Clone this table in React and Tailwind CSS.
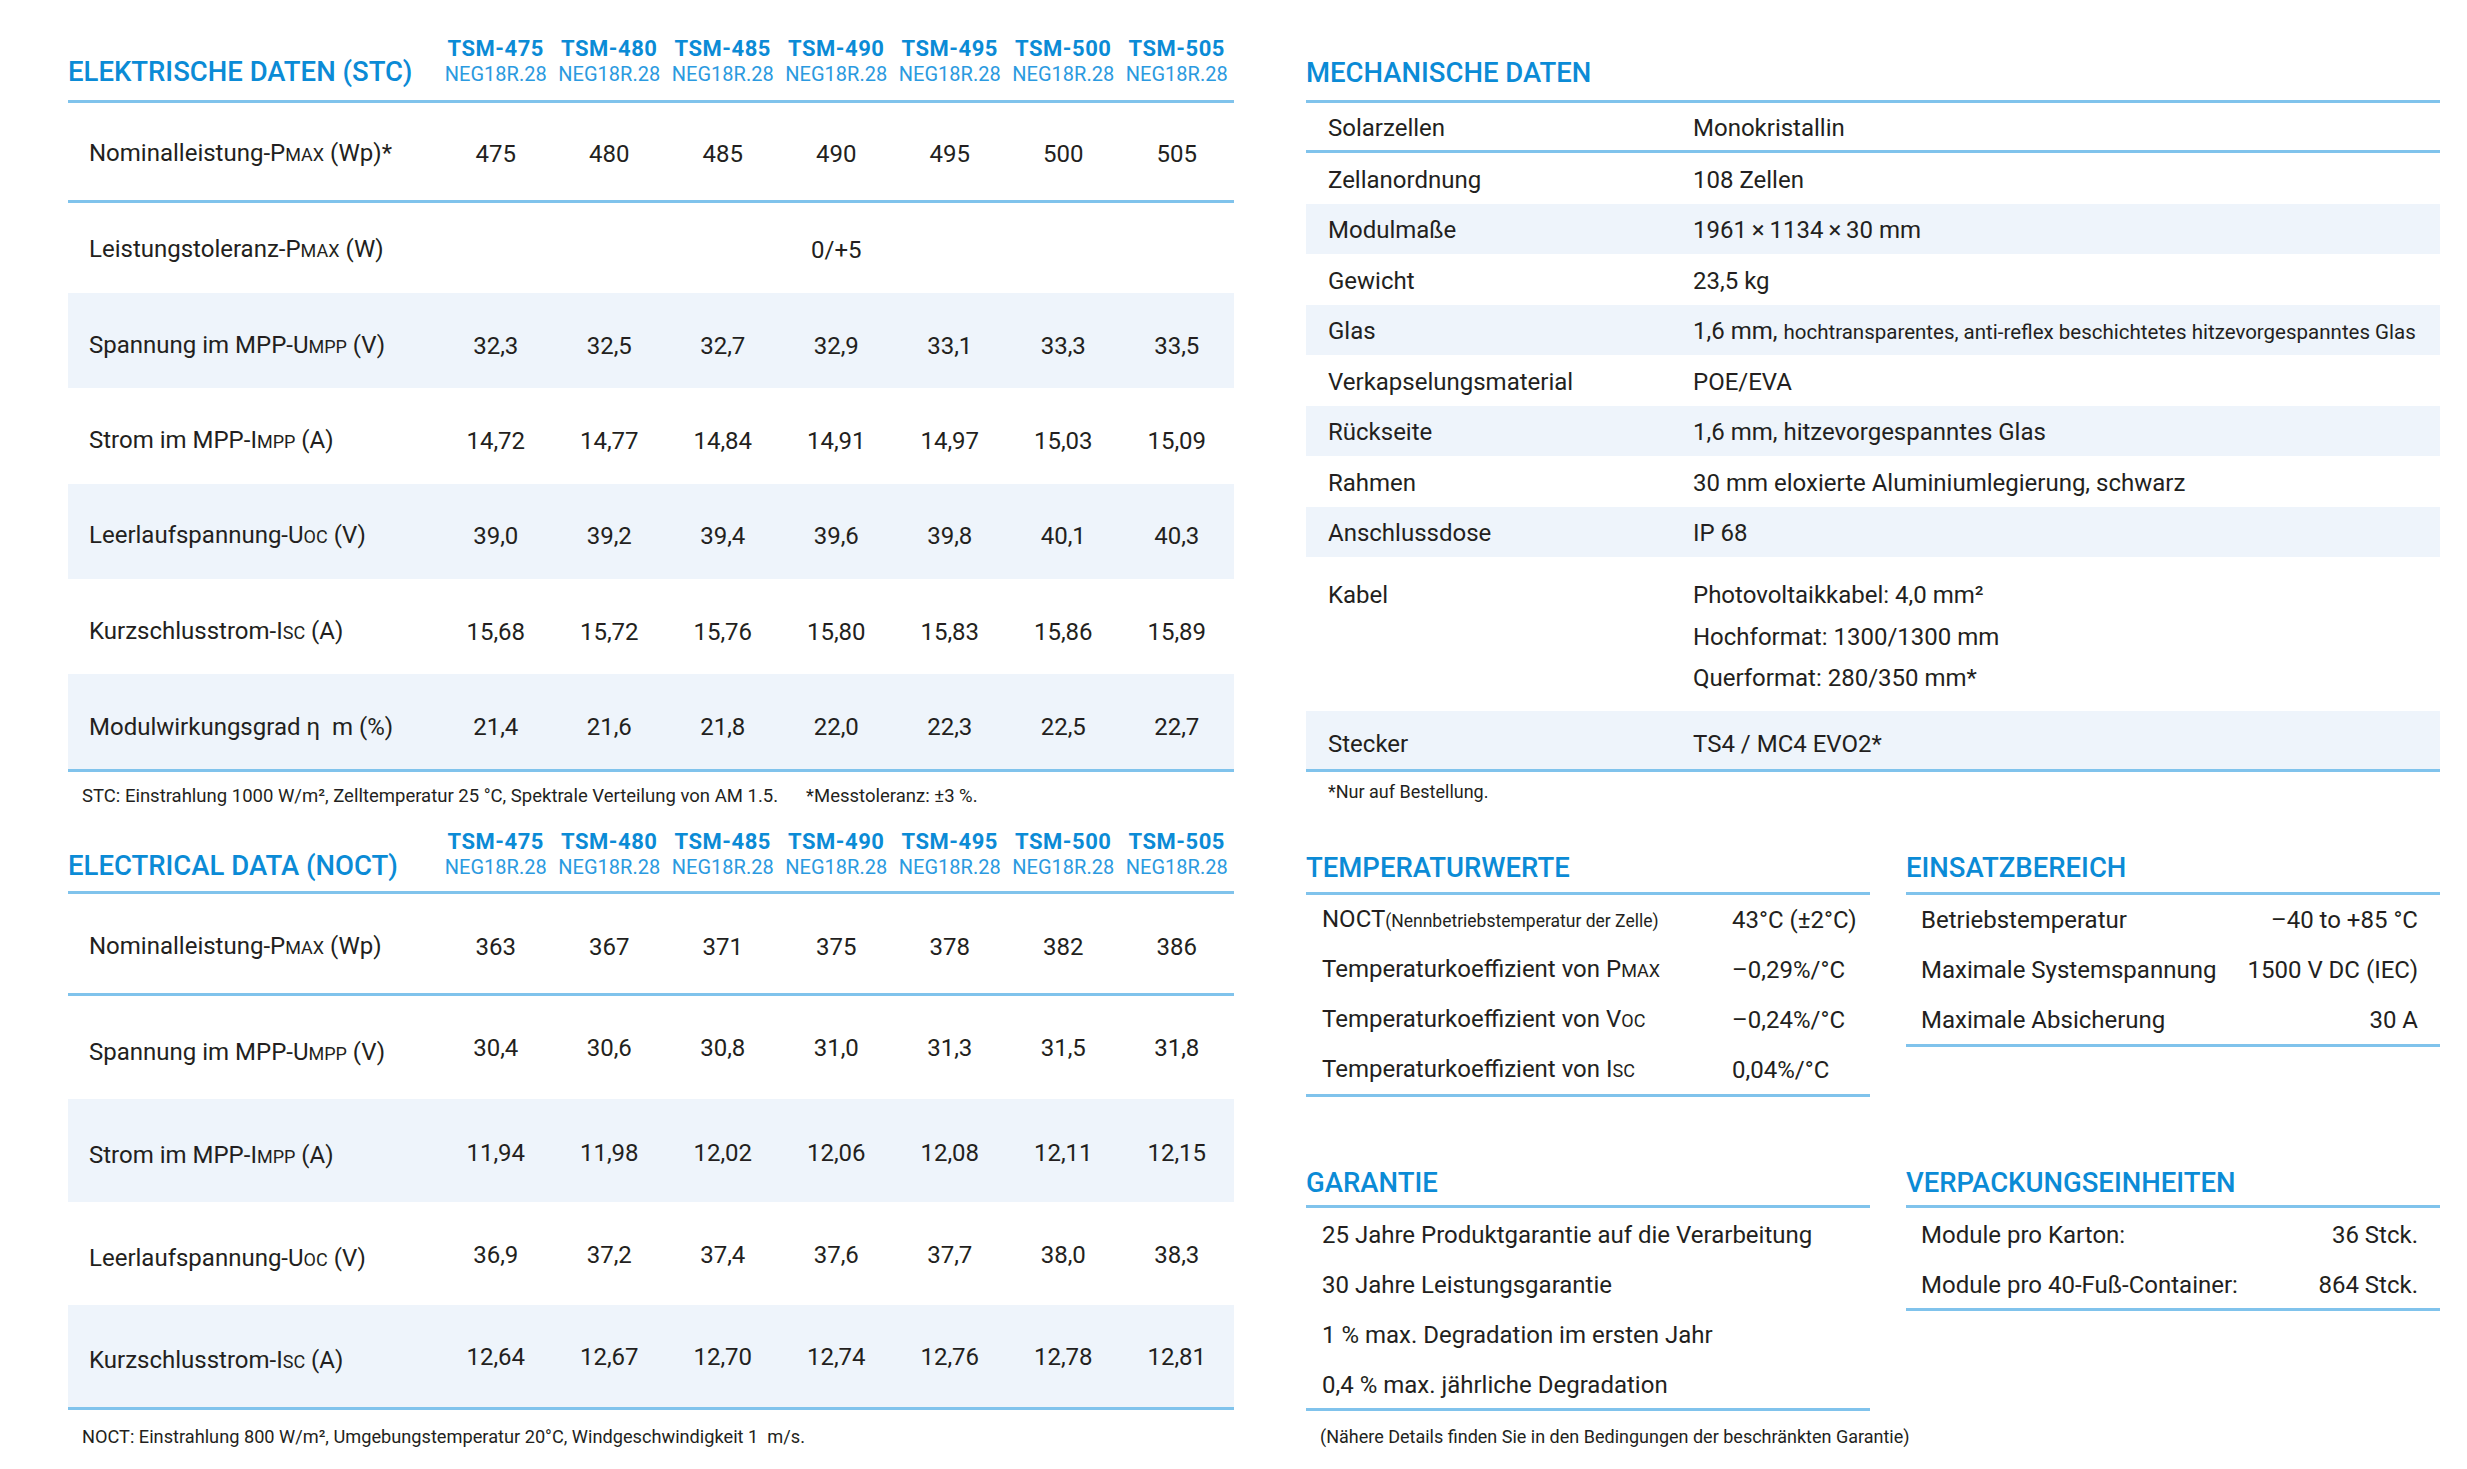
import React from "react";

const MODELS = ["475", "480", "485", "490", "495", "500", "505"];
const LINE = "border-[#80c3ec]";
const COLS = "grid grid-cols-[371px_repeat(7,113.5px)]";

const Sm = ({ children }) => <span className="text-[18px]">{children}</span>;

const STC_ROWS = [
  {
    label: <>Nominalleistung-P<Sm>MAX</Sm> (Wp)*</>,
    values: ["475", "480", "485", "490", "495", "500", "505"],
    cls: "h-[100px] border-b-[3px] border-[#80c3ec]",
    pt: "pt-[5px]",
  },
  {
    label: <>Leistungstoleranz-P<Sm>MAX</Sm> (W)</>,
    span: "0/+5",
    cls: "h-[90px]",
    pt: "pt-[3px]",
  },
  {
    label: <>Spannung im MPP-U<Sm>MPP</Sm> (V)</>,
    values: ["32,3", "32,5", "32,7", "32,9", "33,1", "33,3", "33,5"],
    cls: "h-[95.3px] bg-[#eef4fb]",
    pt: "pt-[10px]",
  },
  {
    label: <>Strom im MPP-I<Sm>MPP</Sm> (A)</>,
    values: ["14,72", "14,77", "14,84", "14,91", "14,97", "15,03", "15,09"],
    cls: "h-[95.3px]",
    pt: "pt-[10px]",
  },
  {
    label: <>Leerlaufspannung-U<Sm>OC</Sm> (V)</>,
    values: ["39,0", "39,2", "39,4", "39,6", "39,8", "40,1", "40,3"],
    cls: "h-[95.3px] bg-[#eef4fb]",
    pt: "pt-[10px]",
  },
  {
    label: <>Kurzschlusstrom-I<Sm>SC</Sm> (A)</>,
    values: ["15,68", "15,72", "15,76", "15,80", "15,83", "15,86", "15,89"],
    cls: "h-[95.3px]",
    pt: "pt-[10px]",
  },
  {
    label: <>Modulwirkungsgrad η&nbsp; m (%)</>,
    values: ["21,4", "21,6", "21,8", "22,0", "22,3", "22,5", "22,7"],
    cls: "h-[95.3px] bg-[#eef4fb]",
    pt: "pt-[10px]",
  },
];

const NOCT_ROWS = [
  {
    label: <>Nominalleistung-P<Sm>MAX</Sm> (Wp)</>,
    values: ["363", "367", "371", "375", "378", "382", "386"],
    cls: "h-[102px] border-b-[3px] border-[#80c3ec]",
    pt: "pt-[7px]",
    vpt: "pt-[7px]",
  },
  {
    label: <>Spannung im MPP-U<Sm>MPP</Sm> (V)</>,
    values: ["30,4", "30,6", "30,8", "31,0", "31,3", "31,5", "31,8"],
    cls: "h-[102.75px]",
    pt: "pt-[10px]",
    vpt: "pt-[1px]",
  },
  {
    label: <>Strom im MPP-I<Sm>MPP</Sm> (A)</>,
    values: ["11,94", "11,98", "12,02", "12,06", "12,08", "12,11", "12,15"],
    cls: "h-[102.75px] bg-[#eef4fb]",
    pt: "pt-[10px]",
    vpt: "pt-[4px]",
  },
  {
    label: <>Leerlaufspannung-U<Sm>OC</Sm> (V)</>,
    values: ["36,9", "37,2", "37,4", "37,6", "37,7", "38,0", "38,3"],
    cls: "h-[102.75px]",
    pt: "pt-[12px]",
    vpt: "pt-[4px]",
  },
  {
    label: <>Kurzschlusstrom-I<Sm>SC</Sm> (A)</>,
    values: ["12,64", "12,67", "12,70", "12,74", "12,76", "12,78", "12,81"],
    cls: "h-[102.75px] bg-[#eef4fb]",
    pt: "pt-[10px]",
    vpt: "pt-[1px]",
  },
];

function ModelHeader({ title, cls, titlePb, stackPb }) {
  return (
    <div className={`${COLS} items-end border-b-[3px] ${LINE} ${cls}`}>
      <h2 className={`text-[27.5px] leading-[32px] font-medium text-[#0b8bd6] ${titlePb}`}>{title}</h2>
      {MODELS.map((m) => (
        <div key={m} className={`flex flex-col items-center ${stackPb}`}>
          <span className="text-[22px] leading-[26px] font-bold tracking-[0.5px] text-[#0b8bd6]">
            TSM-{m}
          </span>
          <span className="text-[20px] leading-[24px] text-[#2b9ae0]">NEG18R.28</span>
        </div>
      ))}
    </div>
  );
}

function DataRow({ row }) {
  return (
    <div className={`${COLS} items-center ${row.cls}`}>
      <div className={`pl-[21px] ${row.pt}`}>{row.label}</div>
      {row.span ? (
        <div className={`col-span-7 text-center ${row.pt}`}>{row.span}</div>
      ) : (
        row.values.map((v, i) => (
          <div key={i} className={`text-center ${row.vpt || row.pt}`}>
            {v}
          </div>
        ))
      )}
    </div>
  );
}

const MECH = [
  ["Zellanordnung", "108 Zellen", ""],
  ["Modulmaße", "1961\u2009×\u20091134\u2009×\u200930 mm", "bg-[#eef4fb]"],
  ["Gewicht", "23,5 kg", ""],
  [
    "Glas",
    <>
      1,6 mm,{" "}
      <span className="text-[20.5px]">hochtransparentes, anti-reflex beschichtetes hitzevorgespanntes Glas</span>
    </>,
    "bg-[#eef4fb]",
  ],
  ["Verkapselungsmaterial", "POE/EVA", ""],
  ["Rückseite", "1,6 mm, hitzevorgespanntes Glas", "bg-[#eef4fb]"],
  ["Rahmen", "30 mm eloxierte Aluminiumlegierung, schwarz", ""],
  ["Anschlussdose", "IP 68", "bg-[#eef4fb]"],
];

function SectionTitle({ children, cls }) {
  return (
    <h2 className={`text-[27.5px] leading-[32px] font-medium text-[#0b8bd6] border-b-[3px] ${LINE} ${cls}`}>
      {children}
    </h2>
  );
}

export default function App() {
  return (
    <div className="w-[2467px] h-[1469px] bg-white text-[#231f20] text-[24px] leading-[30px] font-[family-name:Roboto,sans-serif] flex gap-[72.5px] pl-[68px]">
      {/* left: electrical tables */}
      <div className="w-[1165.5px] flex flex-col">
        <ModelHeader title="ELEKTRISCHE DATEN (STC)" cls="h-[103px]" titlePb="pb-[12px]" stackPb="pb-[14px]" />
        <div className={`border-b-[3px] ${LINE}`}>
          {STC_ROWS.map((r, i) => (
            <DataRow key={i} row={r} />
          ))}
        </div>
        <p className="mt-[12px] pl-[14px] text-[18.5px] leading-[24px] whitespace-nowrap">
          STC: Einstrahlung 1000 W/m², Zelltemperatur 25 °C, Spektrale Verteilung von AM 1.5.
          <span className="ml-[28px]">*Messtoleranz: ±3 %.</span>
        </p>
        <ModelHeader title="ELECTRICAL DATA (NOCT)" cls="h-[86px]" titlePb="pb-[9px]" stackPb="pb-[12px]" />
        <div className={`border-b-[3px] ${LINE}`}>
          {NOCT_ROWS.map((r, i) => (
            <DataRow key={i} row={r} />
          ))}
        </div>
        <p className="mt-[15px] pl-[14px] text-[18.2px] leading-[24px] whitespace-nowrap">
          NOCT: Einstrahlung 800 W/m², Umgebungstemperatur 20°C, Windgeschwindigkeit 1&nbsp; m/s.
        </p>
      </div>

      {/* right: mechanical + others */}
      <div className="w-[1134px] flex flex-col">
        <div className={`h-[103px] flex items-end border-b-[3px] ${LINE}`}>
          <h2 className="text-[27.5px] leading-[32px] font-medium text-[#0b8bd6] pb-[11px]">MECHANISCHE DATEN</h2>
        </div>
        <div className={`border-b-[3px] ${LINE}`}>
          <div className={`grid grid-cols-[387px_1fr] items-center h-[50px] border-b-[3px] ${LINE}`}>
            <div className="pl-[22px] pt-[3px]">Solarzellen</div>
            <div className="pt-[3px]">Monokristallin</div>
          </div>
          {MECH.map(([k, v, bg]) => (
            <div key={k} className={`grid grid-cols-[387px_1fr] items-center h-[50.5px] ${bg}`}>
              <div className="pl-[22px] pt-[3px]">{k}</div>
              <div className="pt-[3px]">{v}</div>
            </div>
          ))}
          <div className="grid grid-cols-[387px_1fr] h-[154px] pt-[18px] leading-[41.5px]">
            <div className="pl-[22px]">Kabel</div>
            <div className="flex flex-col">
              <span>Photovoltaikkabel: 4,0 mm²</span>
              <span>Hochformat: 1300/1300 mm</span>
              <span>Querformat: 280/350 mm*</span>
            </div>
          </div>
          <div className="grid grid-cols-[387px_1fr] items-center h-[58px] bg-[#eef4fb]">
            <div className="pl-[22px] pt-[7px]">Stecker</div>
            <div className="pt-[7px]">TS4 / MC4 EVO2*</div>
          </div>
        </div>
        <p className="mt-[9px] pl-[22px] text-[18px] leading-[22px]">*Nur auf Bestellung.</p>

        <div className="grid grid-cols-[564px_534px] gap-x-[36px]">
          {/* Temperaturwerte */}
          <div className="mt-[49px]">
            <SectionTitle cls="pb-[8px]">TEMPERATURWERTE</SectionTitle>
            <div className={`border-b-[3px] ${LINE}`}>
              {[
                [
                  <>
                    NOCT<span className="text-[17.5px]">(Nennbetriebstemperatur der Zelle)</span>
                  </>,
                  "43°C (±2°C)",
                ],
                [<>Temperaturkoeffizient von P<Sm>MAX</Sm></>, "–0,29%/°C"],
                [<>Temperaturkoeffizient von V<Sm>OC</Sm></>, "–0,24%/°C"],
                [<>Temperaturkoeffizient von I<Sm>SC</Sm></>, "0,04%/°C"],
              ].map(([k, v], i) => (
                <div key={i} className="grid grid-cols-[426px_1fr] items-center h-[49.75px] pt-[1px]">
                  <div className="pl-[16px]">{k}</div>
                  <div>{v}</div>
                </div>
              ))}
            </div>
          </div>

          {/* Einsatzbereich */}
          <div className="mt-[49px]">
            <SectionTitle cls="pb-[8px]">EINSATZBEREICH</SectionTitle>
            <div className={`border-b-[3px] ${LINE}`}>
              {[
                ["Betriebstemperatur", "–40 to +85 °C"],
                ["Maximale Systemspannung", "1500 V DC (IEC)"],
                ["Maximale Absicherung", "30 A"],
              ].map(([k, v]) => (
                <div key={k} className="flex items-center justify-between h-[49.75px] pl-[15px] pr-[22px] pt-[1px]">
                  <span>{k}</span>
                  <span>{v}</span>
                </div>
              ))}
            </div>
          </div>

          {/* Garantie */}
          <div className="mt-[70px]">
            <SectionTitle cls="pb-[6px]">GARANTIE</SectionTitle>
            <div className={`border-b-[3px] ${LINE}`}>
              {[
                "25 Jahre Produktgarantie auf die Verarbeitung",
                "30 Jahre Leistungsgarantie",
                "1 % max. Degradation im ersten Jahr",
                "0,4 % max. jährliche Degradation",
              ].map((t) => (
                <div key={t} className="flex items-center h-[50px] pl-[16px] pt-[3px]">
                  {t}
                </div>
              ))}
            </div>
            <p className="mt-[15px] pl-[14px] text-[18px] leading-[22px] whitespace-nowrap">
              (Nähere Details finden Sie in den Bedingungen der beschränkten Garantie)
            </p>
          </div>

          {/* Verpackungseinheiten */}
          <div className="mt-[70px]">
            <SectionTitle cls="pb-[6px]">VERPACKUNGSEINHEITEN</SectionTitle>
            <div className={`border-b-[3px] ${LINE}`}>
              {[
                ["Module pro Karton:", "36 Stck."],
                ["Module pro 40-Fuß-Container:", "864 Stck."],
              ].map(([k, v]) => (
                <div key={k} className="flex items-center justify-between h-[50px] pl-[15px] pr-[22px] pt-[3px]">
                  <span>{k}</span>
                  <span>{v}</span>
                </div>
              ))}
            </div>
          </div>
        </div>
      </div>
    </div>
  );
}
